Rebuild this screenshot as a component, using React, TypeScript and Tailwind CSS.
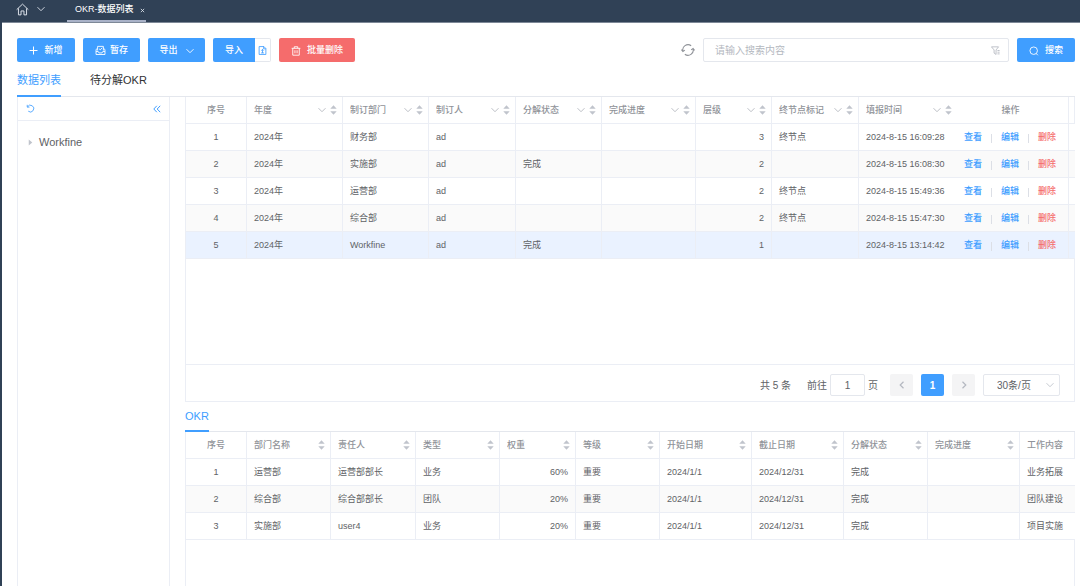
import React, { useState } from "react"

const okrColumns = [
    { label: "年度", width: "w-[96px]" },
    { label: "制订部门", width: "w-[86px]" },
    { label: "制订人", width: "w-[87px]" },
    { label: "分解状态", width: "w-[86px]" },
    { label: "完成进度", width: "w-[94px]" },
    { label: "层级", width: "w-[76px]" },
    { label: "终节点标记", width: "w-[87px]" },
    { label: "填报时间", width: "w-[98px]" },
]

const okrRows = [
    { year: "2024年", dept: "财务部", owner: "ad", status: "", level: 3, leaf: "终节点", time: "2024-8-15 16:09:28" },
    { year: "2024年", dept: "实施部", owner: "ad", status: "完成", level: 2, leaf: "", time: "2024-8-15 16:08:30" },
    { year: "2024年", dept: "运营部", owner: "ad", status: "", level: 2, leaf: "终节点", time: "2024-8-15 15:49:36" },
    { year: "2024年", dept: "综合部", owner: "ad", status: "", level: 2, leaf: "终节点", time: "2024-8-15 15:47:30" },
    { year: "2024年", dept: "Workfine", owner: "ad", status: "完成", level: 1, leaf: "", time: "2024-8-15 13:14:42" },
]

const detailColumns = [
    { label: "部门名称", width: "w-[84px]" },
    { label: "责任人", width: "w-[85px]" },
    { label: "类型", width: "w-[84px]" },
    { label: "权重", width: "w-[76px]" },
    { label: "等级", width: "w-[84px]" },
    { label: "开始日期", width: "w-[92px]" },
    { label: "截止日期", width: "w-[92px]" },
    { label: "分解状态", width: "w-[84px]" },
    { label: "完成进度", width: "w-[92px]" },
]

const detailRows = [
    { dept: "运营部", owner: "运营部部长", type: "业务", weight: "60%", content: "业务拓展" },
    { dept: "综合部", owner: "综合部部长", type: "团队", weight: "20%", content: "团队建设" },
    { dept: "实施部", owner: "user4", type: "业务", weight: "20%", content: "项目实施" },
]

const Icon = ({ className = "", box = "0 0 16 16", stroke = 1.3, children }) => (
    <svg
        viewBox={box}
        className={`shrink-0 ${className}`}
        fill="none"
        stroke="currentColor"
        strokeWidth={stroke}
        aria-hidden="true"
    >
        {children}
    </svg>
)

const ChevronDown = ({ className }) => (
    <Icon className={className} box="0 0 8 8" stroke={0.9}>
        <path d="M0.5 2.2 4 5.7 7.5 2.2" />
    </Icon>
)

const SortCaret = () => (
    <svg viewBox="0 0 7 10" className="h-[10px] w-[7px] shrink-0" fill="#c0c4cc" aria-hidden="true">
        <path d="M3.5 0.2 6.7 3.8H0.3ZM3.5 9.8 0.3 6.2H6.7Z" />
    </svg>
)

const ToolButton = ({ className = "", children }) => (
    <button
        type="button"
        className={`flex h-6 shrink-0 items-center justify-center rounded-xs pt-px text-[9px] font-medium text-white ${className}`}
    >
        {children}
    </button>
)

const HeadCell = ({ label, filter = false, border = true }) => (
    <th className={`p-0 font-medium border-b border-[#ebeef5] ${border ? "border-r" : ""}`}>
        <div className="flex items-center pl-[7px] pr-[5px]">
            <span className="flex-1 truncate pt-0.5 text-left">{label}</span>
            {filter && <ChevronDown className="mr-1 size-2 text-[#b4b8c0]" />}
            <SortCaret />
        </div>
    </th>
)

const Cell = ({ className = "", children = null }) => (
    <td className={`border-b border-r border-[#ebeef5] px-[7px] pt-0.5 pb-0 whitespace-nowrap ${className}`}>
        {children}
    </td>
)

const OkrTable = () => {
    const [selected, setSelected] = useState(4)

    return (
        <table className="w-full table-fixed border-separate border-spacing-0 text-[9px] text-[#606266]">
            <colgroup>
                <col className="w-[61px]" />
                {okrColumns.map((column) => (
                    <col key={column.label} className={column.width} />
                ))}
                <col className="w-[112px]" />
                <col className="w-[6px]" />
            </colgroup>
            <thead>
                <tr className="h-[27px] text-[#909399]">
                    <th className="border-b border-r border-[#ebeef5] px-0 pt-0.5 pb-0 font-medium">序号</th>
                    {okrColumns.map((column) => (
                        <HeadCell key={column.label} label={column.label} filter border={column.label !== "填报时间"} />
                    ))}
                    <th className="border-b border-r border-[#ebeef5] pt-0.5 pb-0 pr-1 pl-0 font-medium">操作</th>
                    <th className="border-b border-[#ebeef5] p-0" />
                </tr>
            </thead>
            <tbody>
                {okrRows.map((row, index) => (
                    <tr
                        key={row.time}
                        onClick={() => setSelected(index)}
                        className={`h-[27px] ${
                            index === selected ? "bg-[#eaf2ff]" : index % 2 ? "bg-[#fafafa]" : "bg-white"
                        }`}
                    >
                        <Cell className="text-center">{index + 1}</Cell>
                        <Cell>{row.year}</Cell>
                        <Cell>{row.dept}</Cell>
                        <Cell>{row.owner}</Cell>
                        <Cell>{row.status}</Cell>
                        <Cell />
                        <Cell className="text-right">{row.level}</Cell>
                        <Cell>{row.leaf}</Cell>
                        <td className="border-b border-[#ebeef5] pt-0.5 pb-0 pl-[7px] pr-0 whitespace-nowrap">
                            {row.time}
                        </td>
                        <td className="border-b border-r border-[#ebeef5] pt-0.5 pb-0 pr-[5px] pl-0">
                            <div className="flex items-center justify-center gap-[9px] font-medium whitespace-nowrap">
                                <a href="#view" className="text-[#409eff]">查看</a>
                                <span className="h-[9px] w-px bg-[#dcdfe6]" />
                                <a href="#edit" className="text-[#409eff]">编辑</a>
                                <span className="h-[9px] w-px bg-[#dcdfe6]" />
                                <a href="#delete" className="text-[#f56c6c]">删除</a>
                            </div>
                        </td>
                        <td className="border-b border-[#ebeef5] p-0" />
                    </tr>
                ))}
            </tbody>
        </table>
    )
}

const DetailTable = () => (
    <table className="w-full table-fixed border-separate border-spacing-0 text-[9px] text-[#606266]">
        <colgroup>
            <col className="w-[61px]" />
            {detailColumns.map((column) => (
                <col key={column.label} className={column.width} />
            ))}
            <col className="w-[55px]" />
        </colgroup>
        <thead>
            <tr className="h-[27px] text-[#909399]">
                <th className="border-b border-r border-[#ebeef5] px-0 pt-0.5 pb-0 font-medium">序号</th>
                {detailColumns.map((column) => (
                    <HeadCell key={column.label} label={column.label} />
                ))}
                <th className="border-b border-[#ebeef5] pt-0.5 pb-0 pl-[7px] pr-0 text-left font-medium whitespace-nowrap">
                    工作内容
                </th>
            </tr>
        </thead>
        <tbody>
            {detailRows.map((row, index) => (
                <tr key={row.dept} className={`h-[27px] ${index % 2 ? "bg-[#fafafa]" : "bg-white"}`}>
                    <Cell className="text-center">{index + 1}</Cell>
                    <Cell>{row.dept}</Cell>
                    <Cell>{row.owner}</Cell>
                    <Cell>{row.type}</Cell>
                    <Cell className="text-right">{row.weight}</Cell>
                    <Cell>重要</Cell>
                    <Cell>2024/1/1</Cell>
                    <Cell>2024/12/31</Cell>
                    <Cell>完成</Cell>
                    <Cell />
                    <td className="border-b border-[#ebeef5] pt-0.5 pb-0 pl-[7px] pr-0 whitespace-nowrap">{row.content}</td>
                </tr>
            ))}
        </tbody>
    </table>
)

const TopBar = () => (
    <header className="flex h-[22px] shrink-0 items-stretch pl-4 text-white">
        <button type="button" aria-label="首页" className="flex h-[18px] items-center gap-2 text-[#dfe4ec]">
            <Icon className="size-[13px]" stroke={1.2}>
                <path d="M0.8 8.2 8 1.4l7.2 6.8M3 6.6v8h3.2V9.8h3.6v4.8H13v-8" />
            </Icon>
            <ChevronDown className="size-2" />
        </button>
        <div className="ml-[22px] flex items-center gap-1.5 border-b-2 border-[#a9b2c8] pl-2 pr-px text-[9px] font-medium">
            <span>OKR-数据列表</span>
            <button type="button" aria-label="关闭" className="text-[#dfe4ec]">
                <Icon className="size-[5px]" box="0 0 6 6" stroke={1}>
                    <path d="M1 1l4 4M5 1 1 5" />
                </Icon>
            </button>
        </div>
    </header>
)

const Toolbar = () => (
    <div className="flex items-center gap-2">
        <ToolButton className="w-[58px] gap-1.5 bg-[#409eff]">
            <Icon className="size-[9px]" box="0 0 9 9" stroke={1}>
                <path d="M4.5 0.5v8M0.5 4.5h8" />
            </Icon>
            新增
        </ToolButton>
        <ToolButton className="w-[57px] gap-1 bg-[#409eff]">
            <Icon className="size-[11px]">
                <path d="M1.5 6.5v7.3h13V6.5M1.5 9.5h3.2l1 2h4.6l1-2h3.2M1.5 6.5l2-1.4M14.5 6.5l-2-1.4M3.8 8V2h8.4v6M6 5.6l1.6 1.5L10.5 4" />
            </Icon>
            暂存
        </ToolButton>
        <ToolButton className="w-[57px] gap-2 bg-[#409eff]">
            导出
            <ChevronDown className="size-2" />
        </ToolButton>
        <div className="flex">
            <ToolButton className="w-[42px] rounded-r-none bg-[#409eff]">导入</ToolButton>
            <button
                type="button"
                aria-label="导入模板"
                className="flex h-6 w-4 items-center justify-center rounded-r-xs border border-l-0 border-[#e4e7ed] text-[#409eff]"
            >
                <Icon className="size-[9px]" stroke={1.5}>
                    <path d="M2 1h8.5L14 4.5V15H2ZM10 1v4h4M8 6v6.5M5.5 12.3h5M5.8 8.2 8 6l2.2 2.2" />
                </Icon>
            </button>
        </div>
        <ToolButton className="w-[76px] gap-1.5 bg-[#f56c6c]">
            <Icon className="size-[10px]" stroke={1.4}>
                <path d="M1 3.7h14M5.2 3.5V1.2h5.6v2.3M2.8 3.7v11h10.4v-11M6.3 6.8v4.8M9.7 6.8v4.8" />
            </Icon>
            批量删除
        </ToolButton>

        <button type="button" aria-label="刷新" className="ml-auto text-[#909399]">
            <Icon className="size-[14px]" stroke={1.3}>
                <path d="M2.2 9.6A6 6 0 0 1 11.6 3.2M13.8 6.4A6 6 0 0 1 4.4 12.8M0.5 7.6l1.7 2.2 2.2-1.7M15.5 8.4l-1.7-2.2-2.2 1.7" />
            </Icon>
        </button>
        <div className="flex h-6 w-[306px] min-w-[200px] items-center rounded-xs border border-[#e4e7ed] pl-[11px] pr-2">
            <input
                type="text"
                aria-label="搜索内容"
                placeholder="请输入搜索内容"
                className="min-w-0 flex-1 text-[10px] text-[#606266] outline-none placeholder:text-[#b4b8c0]"
            />
            <button type="button" aria-label="筛选" className="text-[#b4b8c0]">
                <Icon className="size-[9px]" stroke={1.5}>
                    <path d="M0.8 1.5h12.6L9 7v8L5.5 12.6V7ZM11.5 8h3.8M11.5 11h3.8M11.5 14h3.8" />
                </Icon>
            </button>
        </div>
        <ToolButton className="w-[58px] gap-1.5 bg-[#409eff]">
            <Icon className="size-[10px]" stroke={1.4}>
                <circle cx="7.5" cy="7.5" r="6" />
                <path d="m11.4 12 2.8 2.8" />
            </Icon>
            搜索
        </ToolButton>
    </div>
)

const Pager = () => (
    <div className="flex h-[37px] shrink-0 items-center justify-end border-t border-[#ebeef5] pr-[14px] pt-1 text-[10px] text-[#606266]">
        <span className="mr-4">共 5 条</span>
        <label htmlFor="goto-page">前往</label>
        <input
            id="goto-page"
            type="text"
            defaultValue="1"
            className="mx-[3px] h-[22px] w-[35px] rounded-xs border border-[#e4e7ed] text-center outline-none"
        />
        <span className="mr-3">页</span>
        <div className="flex gap-2">
            <button
                type="button"
                aria-label="上一页"
                className="flex h-[22px] w-[23px] items-center justify-center rounded-xs bg-[#f4f4f5] text-[#b4b8c0]"
            >
                <Icon className="size-2" box="0 0 8 8" stroke={1.2}>
                    <path d="M5.5 0.8 2.2 4l3.3 3.2" />
                </Icon>
            </button>
            <button type="button" className="h-[22px] w-[23px] rounded-xs bg-[#409eff] font-bold text-white">1</button>
            <button
                type="button"
                aria-label="下一页"
                className="flex h-[22px] w-[23px] items-center justify-center rounded-xs bg-[#f4f4f5] text-[#b4b8c0]"
            >
                <Icon className="size-2" box="0 0 8 8" stroke={1.2}>
                    <path d="M2.5 0.8 5.8 4 2.5 7.2" />
                </Icon>
            </button>
            <div className="relative">
                <select
                    aria-label="每页条数"
                    className="h-[22px] w-[77px] appearance-none rounded-xs border border-[#e4e7ed] bg-white pl-[13px] outline-none"
                >
                    <option>30条/页</option>
                </select>
                <ChevronDown className="pointer-events-none absolute right-1.5 top-[7px] size-2 text-[#c0c4cc]" />
            </div>
        </div>
    </div>
)

const Sidebar = () => (
    <aside className="flex w-[153px] shrink-0 flex-col border-x border-[#ebeef5]">
        <div className="flex h-6 items-center justify-between border-b border-[#ebeef5] px-2 text-[#409eff]">
            <button type="button" aria-label="刷新">
                <Icon className="size-[9px]" stroke={1.5}>
                    <path d="M2.2 1.5v4h4M2.6 5.2A6 6 0 1 1 4 12.8" />
                </Icon>
            </button>
            <button type="button" aria-label="收起">
                <Icon className="size-2" box="0 0 8 8" stroke={1}>
                    <path d="M3.8 0.8 0.8 4l3 3.2M7.2 0.8 4.2 4l3 3.2" />
                </Icon>
            </button>
        </div>
        <button
            type="button"
            className="mt-3 flex h-[18px] items-center gap-1.5 pl-[10px] text-[11px] text-[#606266]"
        >
            <svg viewBox="0 0 5 8" className="h-[7px] w-[5px]" fill="#c0c4cc" aria-hidden="true">
                <path d="M0.5 0.5 4.5 4 0.5 7.5Z" />
            </svg>
            Workfine
        </button>
    </aside>
)

const App = () => {
    return (
        <div className="flex h-screen flex-col bg-[#304156] font-['Liberation_Sans','Noto_Sans_CJK_SC',sans-serif]">
            <TopBar />
            <main className="ml-0.5 flex min-h-0 flex-1 flex-col border-t border-[#7d8897] bg-white pl-[15px] pr-[5px] pt-[15px]">
                <Toolbar />
                <nav className="mt-1 flex h-[31px] shrink-0 gap-[29px] border-b border-[#e4e7ed] text-[11px]">
                    <button type="button" className="-mb-px border-b-2 border-[#409eff] text-[#409eff]">数据列表</button>
                    <button type="button" className="-mb-px border-b-2 border-transparent text-[#303133]">待分解OKR</button>
                </nav>
                <div className="flex min-h-0 flex-1 gap-[15px]">
                    <Sidebar />
                    <div className="flex min-w-0 flex-1 flex-col">
                        <section className="flex h-[305px] shrink-0 flex-col border border-t-0 border-[#ebeef5]">
                            <div className="min-h-0 flex-1">
                                <OkrTable />
                            </div>
                            <Pager />
                        </section>
                        <div className="flex h-[30px] shrink-0 border-b border-[#e4e7ed] text-[11px]">
                            <button type="button" className="-mb-px border-b-2 border-[#409eff] text-[#409eff]">OKR</button>
                        </div>
                        <section className="min-h-0 flex-1 border-x border-[#ebeef5]">
                            <DetailTable />
                        </section>
                    </div>
                </div>
            </main>
        </div>
    )
}

export default App
